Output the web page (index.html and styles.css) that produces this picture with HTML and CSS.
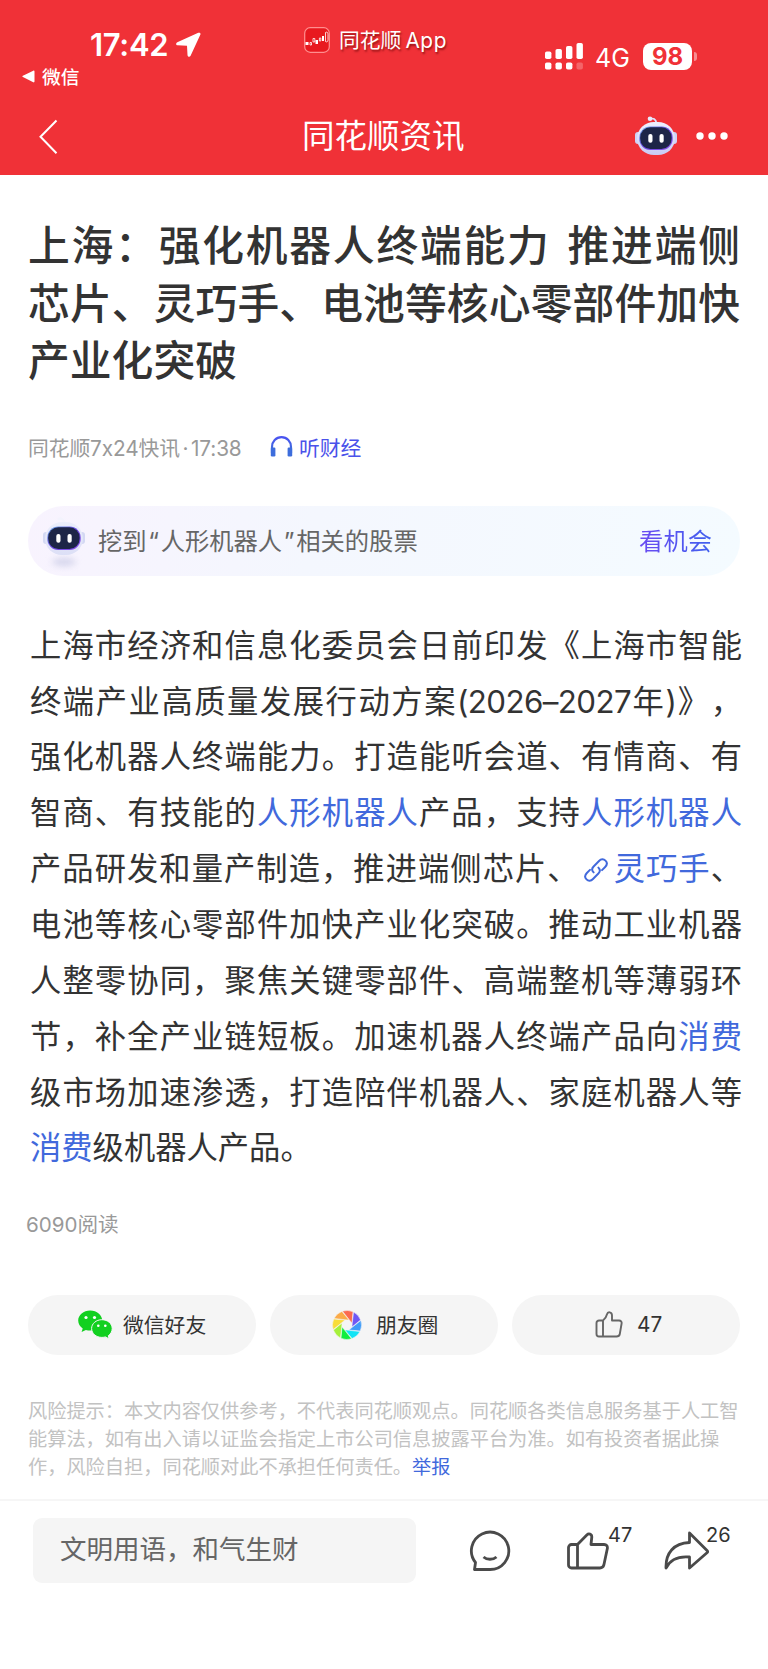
FILE: index.html
```html
<!DOCTYPE html>
<html lang="zh-CN">
<head>
<meta charset="utf-8">
<title>同花顺资讯</title>
<link rel="stylesheet" href="styles.css">
</head>
<body>
<svg class="defs" width="0" height="0">
  <defs>
    <linearGradient id="shell" x1="0" y1="0" x2="0" y2="1"><stop offset="0" stop-color="#eef0ff"/><stop offset="1" stop-color="#c9caf4"/></linearGradient>
    <linearGradient id="pale" x1="0" y1="0" x2="0" y2="1"><stop offset="0" stop-color="#eceefb"/><stop offset="1" stop-color="#dcdff6"/></linearGradient>
    <linearGradient id="rim" x1="0" y1="0" x2="1" y2="1"><stop offset="0" stop-color="#6fb0e8"/><stop offset=".5" stop-color="#6a48e0"/><stop offset="1" stop-color="#8a4fe8"/></linearGradient>
    <linearGradient id="ear" x1="0" y1="0" x2="0" y2="1"><stop offset="0" stop-color="#4a53f0"/><stop offset="1" stop-color="#3d74d8"/></linearGradient>
    <symbol id="face" viewBox="0 0 42 40">
      <rect x="4.300" y="10.500" width="33.400" height="23.500" rx="11" fill="url(#rim)"/>
      <rect x="5.200" y="11.300" width="31.400" height="21.700" rx="10.200" fill="#1d2547"/>
      <rect x="13.300" y="18" width="4.200" height="8.800" rx="2" fill="#fff"/>
      <rect x="24.500" y="18" width="4.200" height="8.800" rx="2" fill="#fff"/>
    </symbol>
    <symbol id="thumb" viewBox="0 0 42 38">
      <path d="M10.500 12.500H4.500a3 3 0 0 0-3 3V33a3 3 0 0 0 3 3H33c2 0 3.300-1 3.800-2.800l3.500-16.500c.5-2.500-.8-4.200-3.200-4.200H24l.8-7.500c0-3-3-4-5-2L10.500 12.500V36" fill="none" stroke="currentColor" stroke-linejoin="round" stroke-linecap="round"/>
    </symbol>
  </defs>
</svg>

<header class="top">
  <div class="status">
    <div class="status-left">
      <div class="clock">
        <span>17:42</span>
        <svg width="25" height="25" viewBox="0 0 25 25"><path d="M22.300.800 1.300 10.300c-1.800.9-1.400 2.900.4 3l9.300.500.500 9.300c.1 2 2.300 2.400 3.100.7L24.300 2.800C25 1.300 23.800.200 22.300.800Z" fill="#fff"/></svg>
      </div>
      <div class="return">
        <svg width="13" height="13" viewBox="0 0 13 13"><path d="M11.300.7.900 5.800c-.7.400-.7 1 0 1.300l10.400 5.200c.7.400 1.200 0 1.200-.7V1.400c0-.7-.5-1.100-1.200-.7Z" fill="#fff"/></svg>
        <span>微信</span>
      </div>
    </div>
    <div class="app">
      <svg width="26" height="26" viewBox="0 0 26 26"><rect x=".7" y=".7" width="24.600" height="24.600" rx="5.500" fill="#e8191f" stroke="#ff8f8f" stroke-width="1.200"/><path d="M1.500 15h3v3h-3zM11.500 13h2.500v4h-2.500zM18 9h2v5h-2z" fill="#fff"/><path d="M6 15.500h1.500V18H6zM9 11.500h1.800V15H9zM15.400 11h1.400v3h-1.400zM21.500 5.500c1.500-1 2.500 0 2.500 2v5c0 2-1 3-2.500 2z" fill="none" stroke="#fff" stroke-width=".8"/></svg>
      <span class="app-name">同花顺<span class="latin">App</span></span>
    </div>
    <div class="status-right">
      <svg class="signal" width="38" height="27" viewBox="0 0 38 27" fill="#fff"><rect x="0" y="8.500" width="6.400" height="7.500" rx="1.800"/><rect x="10.500" y="6" width="6.400" height="10" rx="1.800"/><rect x="21" y="3" width="6.400" height="13" rx="1.800"/><rect x="31.500" y="0" width="6.400" height="16" rx="1.800"/><rect x="0" y="19.500" width="6.400" height="7" rx="1.800"/><rect x="10.500" y="19.500" width="6.400" height="7" rx="1.800"/><rect x="21" y="19.500" width="6.400" height="7" rx="1.800"/><rect x="31.500" y="19.500" width="6.400" height="7" rx="1.800" opacity=".25"/></svg>
      <span class="net">4G</span>
      <span class="battery">98</span>
      <span class="nub"></span>
    </div>
  </div>
  <div class="nav">
    <svg class="back" width="20" height="36" viewBox="0 0 20 36"><path d="M17.500 1.500 1.500 17.700l16 16.500" fill="none" stroke="#fff" stroke-width="2"/></svg>
    <h1>同花顺资讯</h1>
    <div class="nav-right">
      <svg width="42" height="40" viewBox="0 0 42 40">
        <path d="M15 3.500c3-2 6-.5 6.500 4" fill="none" stroke="#dfe1fb" stroke-width="1.800"/>
        <circle cx="15" cy="2.800" r="2.300" fill="#e8eafd"/>
        <rect x="0" y="16" width="6" height="12" rx="3" fill="#cfd2f5"/><rect x="36" y="16" width="6" height="12" rx="3" fill="#cfd2f5"/>
        <rect x="2" y="6" width="38" height="33" rx="17" fill="url(#shell)"/>
        <use href="#face"/>
      </svg>
      <svg width="32" height="8" viewBox="0 0 32 8" fill="#fff"><circle cx="4" cy="4" r="3.700"/><circle cx="16" cy="4" r="3.700"/><circle cx="28" cy="4" r="3.700"/></svg>
    </div>
  </div>
</header>

<main>
  <h2 class="title">
    <span class="line">上海：强化机器人终端能力 推进端侧</span>
    <span class="line">芯片、灵巧手、电池等核心零部件加快</span>
    <span class="line end">产业化突破</span>
  </h2>
  <div class="meta">
    <span class="source">同花顺7x24快讯<span class="dot">·</span>17:38</span>
    <svg width="23" height="21" viewBox="0 0 23 21"><path d="M2 17v-6C2 5.500 6 1.200 11.500 1.200S21 5.500 21 11v6" fill="none" stroke="url(#ear)" stroke-width="2.200"/><rect x=".8" y="11.500" width="4.600" height="9" rx="1.200" fill="#3d6ddc"/><rect x="17.600" y="11.500" width="4.600" height="9" rx="1.200" fill="#3d6ddc"/></svg>
    <span class="listen">听财经</span>
  </div>
  <div class="banner">
    <span class="bot"><svg width="42" height="56" viewBox="0 0 42 56">
      <ellipse class="shade" cx="21" cy="46" rx="12" ry="4" fill="#d5d5ec"/>
      <path d="M15 3.500c3-2 6-.5 6.500 4" fill="none" stroke="#f3f3fd" stroke-width="2.500"/>
      <rect x="0" y="16" width="6" height="12" rx="3" fill="#d3d8f3"/><rect x="36" y="16" width="6" height="12" rx="3" fill="#d3d8f3"/>
      <rect x="2" y="6" width="38" height="33" rx="17" fill="url(#pale)"/>
      <use href="#face" width="42" height="40"/>
    </svg></span>
    <span class="banner-text">挖到<span class="quote">“</span>人形机器人<span class="quote">”</span>相关的股票</span>
    <span class="banner-link">看机会</span>
  </div>
  <p class="body">
    <span class="line">上海市经济和信息化委员会日前印发《上海市智能</span>
    <span class="line">终端产业高质量发展行动方案<span class="num">(2026–2027</span>年<span class="num">)</span>》，</span>
    <span class="line">强化机器人终端能力。打造能听会道、有情商、有</span>
    <span class="line">智商、有技能的<a>人形机器人</a>产品，支持<a>人形机器人</a></span>
    <span class="line">产品研发和量产制造，推进端侧芯片、<svg class="link" width="26" height="26" viewBox="0 0 25 25"><g fill="none" stroke="#4169dc" stroke-width="1.900" stroke-linecap="round"><path d="M10.200 14.800c-1.800-1.800-1.700-4 0-5.700l5.200-5.300c2-2 4.500-2 6.200-.3s1.600 4.200-.3 6.100l-3 3"/><path d="M14.800 10.200c1.800 1.800 1.700 4 0 5.700l-5.200 5.300c-2 2-4.500 2-6.200.3s-1.600-4.200.3-6.100l3-3"/></g></svg><a>灵巧手</a>、</span>
    <span class="line">电池等核心零部件加快产业化突破。推动工业机器</span>
    <span class="line">人整零协同，聚焦关键零部件、高端整机等薄弱环</span>
    <span class="line">节，补全产业链短板。加速机器人终端产品向<a>消费</a></span>
    <span class="line">级市场加速渗透，打造陪伴机器人、家庭机器人等</span>
    <span class="line end"><a>消费</a>级机器人产品。</span>
  </p>
  <div class="reads">6090阅读</div>
  <div class="share">
    <div class="pill">
      <svg width="35" height="30" viewBox="0 0 35 30"><path d="M12.200.5C5.500.5.200 5 .2 10.600c0 3.200 1.700 6 4.500 7.900L3.600 22l4.300-2.100c1.400.4 2.800.6 4.300.6 6.700 0 12-4.400 12-9.900S18.900.5 12.200.5Z" fill="#12d020"/><circle cx="8" cy="7.500" r="1.600" fill="#fff"/><circle cx="16.500" cy="7.500" r="1.600" fill="#fff"/><path d="M23.900 9.700c-5.800 0-10.300 4-10.300 8.800 0 5 4.500 8.900 10.300 8.900 1.300 0 2.500-.2 3.600-.5l3.600 2-.8-3.200c2.400-1.700 3.900-4.300 3.900-7.200 0-4.800-4.500-8.800-10.300-8.800Z" fill="#12d020" stroke="#f5f5f5" stroke-width="1"/><circle cx="20.300" cy="15.700" r="1.300" fill="#fff"/><circle cx="27.300" cy="15.700" r="1.300" fill="#fff"/></svg>
      <span>微信好友</span>
    </div>
    <div class="pill moments">
      <svg width="30" height="30" viewBox="-15 -15 30 30" stroke="#f5f5f5" stroke-width=".5">
        <path d="M-4.500-13.800A14.500 14.500 0 0 1 6-13.200L5-2 2.200-5.300Z" fill="#fb6a50"/>
        <path d="M-4.500-13.800A14.500 14.500 0 0 1 6-13.200L5-2 2.200-5.300Z" fill="#6f57f5" transform="rotate(45)"/>
        <path d="M-4.500-13.800A14.500 14.500 0 0 1 6-13.200L5-2 2.200-5.300Z" fill="#3f9cf8" transform="rotate(90)"/>
        <path d="M-4.500-13.800A14.500 14.500 0 0 1 6-13.200L5-2 2.200-5.300Z" fill="#10e4f5" transform="rotate(135)"/>
        <path d="M-4.500-13.800A14.500 14.500 0 0 1 6-13.200L5-2 2.200-5.300Z" fill="#10ee40" transform="rotate(180)"/>
        <path d="M-4.500-13.800A14.500 14.500 0 0 1 6-13.200L5-2 2.200-5.300Z" fill="#a6f03a" transform="rotate(225)"/>
        <path d="M-4.500-13.800A14.500 14.500 0 0 1 6-13.200L5-2 2.200-5.300Z" fill="#f8dc38" transform="rotate(270)"/>
        <path d="M-4.500-13.800A14.500 14.500 0 0 1 6-13.200L5-2 2.200-5.300Z" fill="#fbab48" transform="rotate(315)"/></svg>
      <span>朋友圈</span>
    </div>
    <div class="pill like">
      <svg width="28" height="27" viewBox="0 0 28 27"><path d="M8 9.500H4a2.500 2.500 0 0 0-2.500 2.500v11A2.500 2.500 0 0 0 4 25.500h17.500c1.800 0 3-.8 3.300-2.500l1.800-10.500c.3-1.900-.8-3-2.500-3H17V4.500c0-4-4.300-4-5-1.300C11.300 6 10 8 8 9.500v16" fill="none" stroke="#666" stroke-width="1.900" stroke-linejoin="round"/></svg>
      <span>47</span>
    </div>
  </div>
  <p class="risk">
    <span class="line">风险提示：本文内容仅供参考，不代表同花顺观点。同花顺各类信息服务基于人工智</span>
    <span class="line">能算法，如有出入请以证监会指定上市公司信息披露平台为准。如有投资者据此操</span>
    <span class="line">作，风险自担，同花顺对此不承担任何责任。<a>举报</a></span>
  </p>
</main>

<footer class="bar">
  <div class="input">文明用语，和气生财</div>
  <div class="act comment"><svg width="42" height="42" viewBox="0 0 42 42" fill="none" stroke="#4a4a4a"><path d="M5.500 39.500h15.500A18.700 18.700 0 1 0 6.500 32.500Z" stroke-linejoin="round"/><path d="M14.500 27c3.500 3 9.500 3 13 0"/></svg></div>
  <div class="act thumb"><svg width="42" height="38"><use href="#thumb"/></svg><span>47</span></div>
  <div class="act forward"><svg width="45" height="39" viewBox="0 0 45 39"><path d="M25.500 2 43 19.500c.8.800.8 1.500 0 2.300L25.500 37V26C14 25 6.500 28 2 37 1.500 22.500 9.500 12 25.500 11.500Z" fill="none" stroke="currentColor" stroke-linejoin="round"/></svg><span>26</span></div>
</footer>
</body>
</html>
```
FILE: styles.css
```css
* { box-sizing: border-box; }
body {
  margin: 0;
  width: 768px;
  height: 1669px;
  overflow: hidden;
  background: #fff;
  color: #333;
  font-family: Inter, "Noto Sans CJK SC", sans-serif;
  text-spacing-trim: space-all;
}
svg { display: block; flex: none; }
.defs { position: absolute; }
h1, h2, p { margin: 0; font-weight: 400; }
a { color: #4169dc; }
.line {
  display: block;
  white-space: nowrap;
  text-align: justify;
  text-align-last: justify;
}
.line.end { text-align-last: left; }

/* Status bar and navigation */
.top { height: 175px; background: #f03137; color: #fff; }
.status { height: 99px; display: grid; grid-template-columns: 304px 241px 1fr; }
.clock { display: flex; align-items: center; gap: 7px; margin: 26px 0 0 90px; height: 36px; font-size: 31px; font-weight: 600; }
.clock span { width: 79px; white-space: nowrap; letter-spacing: -0.300px; }
.return { display: flex; align-items: center; gap: 7px; margin-left: 22px; height: 28px; font-size: 18.700px; font-weight: 500; }
.return span { margin-top: -2px; }
.app { display: flex; align-items: center; gap: 9px; height: 26px; margin-top: 27px; font-size: 20.800px; white-space: nowrap; }
.app-name { margin-top: -3px; text-shadow: 1px 2px 2px rgba(90, 0, 0, .6); }
.latin { margin-left: 4px; letter-spacing: .6px; }
.status-right { display: flex; align-items: center; height: 27px; margin-top: 43px; }
.net { width: 47px; margin-left: 12px; padding-top: 3px; font-size: 25px; }
.battery { width: 49px; height: 27px; line-height: 27px; margin-left: 1px; border-radius: 8px; background: #fff; color: #f03137; font-size: 24px; font-weight: 700; text-align: center; }
.nub { width: 3px; height: 9px; margin-left: 2px; border-radius: 0 3px 3px 0; background: rgba(255, 255, 255, .45); }
.nav { height: 76px; display: grid; grid-template-columns: 302px 333px 1fr; align-items: center; }
.back { margin-left: 39px; }
.nav h1 { font-size: 32.500px; line-height: 40px; }
.nav-right { display: flex; align-items: center; gap: 19px; margin-top: -2px; }

/* Article */
.title { margin: 43px 28px 0; font-size: 41.800px; line-height: 57.600px; font-weight: 500; word-spacing: 4px; }
.meta { display: flex; align-items: center; height: 30px; margin: 41px 28px 0; font-size: 20.800px; }
.source { width: 242px; color: #999; white-space: nowrap; letter-spacing: -.1px; }
.dot { margin: 0 2.500px; }
.listen { margin-left: 6px; color: #4a52ea; }
.banner { display: flex; align-items: center; height: 70px; margin: 44px 28px 0; padding: 0 28px 0 15px; border-radius: 35px; background: linear-gradient(100deg, #f8f3fe 0%, #f4f7fe 40%, #f4fbff 100%); font-size: 24.300px; }
.bot { width: 55px; margin-top: 6px; }
.shade { filter: blur(3px); }
.banner-text { flex: 1; margin-top: -2px; color: #666; }
.quote { margin: 0 1.700px; }
.banner-link { margin-top: -2px; color: transparent; background: linear-gradient(90deg, #6a4af2, #4060ee); background-clip: text; -webkit-background-clip: text; }
.body { margin: 43px 26px 0 30px; font-size: 31.300px; line-height: 55.850px; }
.num { letter-spacing: -.6px; }
.body .link { display: inline-block; vertical-align: -3px; margin: 0 4px 0 3px; }
.reads { margin: 32.500px 26px 0; height: 30px; line-height: 30px; font-size: 20.600px; color: #999; }
.share { display: grid; grid-template-columns: repeat(3, 1fr); gap: 14px; margin: 55px 28px 0; }
.pill { display: flex; align-items: center; height: 60px; padding-left: 50px; gap: 10px; border-radius: 30px; background: #f5f5f5; font-size: 20.800px; }
.pill span { margin-top: -2px; }
.moments { padding-left: 62px; gap: 14px; }
.like { padding-left: 83px; gap: 14px; }
.like span { margin-top: 0; }
.risk { margin: 42px 28px 0; font-size: 19.220px; line-height: 28px; color: #c2c2c2; }
.risk .line { text-align-last: left; }

/* Bottom bar */
.bar { display: flex; align-items: flex-start; height: 170px; margin-top: 18px; padding: 17px 0 0 33px; border-top: 2px solid #f6f6f6; color: #4a4a4a; }
.input { width: 383px; height: 65px; line-height: 63px; padding-left: 27px; border-radius: 9px; background: #f5f5f5; color: #666; font-size: 26.500px; }
.act { display: flex; }
.act span { margin: -9px 0 0 -1px; font-size: 20px; line-height: 24px; color: #333; }
.act svg { stroke-width: 2.800px; }
.comment { margin: 12px 0 0 53px; }
.thumb { width: 97px; margin: 14px 0 0 56px; }
.forward { margin-top: 13px; }
.forward span { margin-left: -3px; margin-top: -8px; }
```
